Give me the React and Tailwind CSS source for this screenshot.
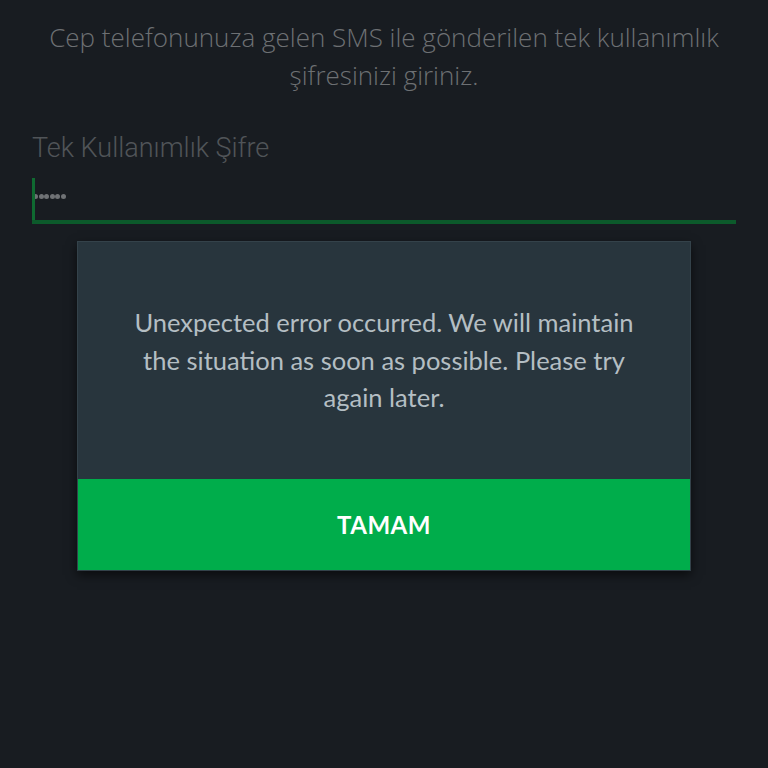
import React from 'react';

const App = () => {
    return (
        <div className="w-[768px] h-[768px] bg-[#181c21] overflow-hidden flex flex-col">
            {/* ── Intro text ── */}
            <p
                className="mt-[18px] px-8 text-center text-[26px] leading-[38px] text-[#6d7073] font-light"
                style={{ fontFamily: '"Open Sans", sans-serif' }}
            >
                Cep telefonunuza gelen SMS ile gönderilen tek kullanımlık şifresinizi giriniz.
            </p>

            {/* ── OTP field ── */}
            <div className="mt-[39px] ml-[32px] mr-[32px]" style={{ fontFamily: 'Roboto, sans-serif' }}>
                <p className="text-[27px] leading-[30px] text-[#505458] font-light">Tek Kullanımlık Şifre</p>
                <div className="relative h-[61px] border-b-[4px] border-[#0c5a2b] flex items-start pt-[31px]">
                    <span className="absolute left-0 top-[15px] bottom-0 w-[3px] bg-[#0f6a31]" />
                    <div className="flex gap-[0.5px] ml-[1px]">
                        {[0, 1, 2, 3, 4, 5].map((i) => (
                            <span key={i} className="w-[5px] h-[5px] rounded-full bg-[#6f7275]" />
                        ))}
                    </div>
                </div>
            </div>

            {/* ── Error dialog ── */}
            <div className="mt-[17px] mx-auto w-[614px] bg-[#28353d] border border-[#34424a] shadow-[0_4px_10px_rgba(0,0,0,0.6)] flex flex-col">
                <div className="h-[237px] flex items-center justify-center">
                    <p
                        className="w-[540px] text-center text-[25.5px] leading-[37.5px] text-[#b4bec3]"
                        style={{ fontFamily: 'Lato, sans-serif' }}
                    >
                        Unexpected error occurred. We will maintain the situation as soon as possible. Please try again later.
                    </p>
                </div>
                <button
                    className="h-[91px] bg-[#00ad4b] text-white text-[24px] font-bold tracking-[0.5px]"
                    style={{ fontFamily: 'Lato, sans-serif' }}
                >
                    TAMAM
                </button>
            </div>
        </div>
    );
};

export default App;
